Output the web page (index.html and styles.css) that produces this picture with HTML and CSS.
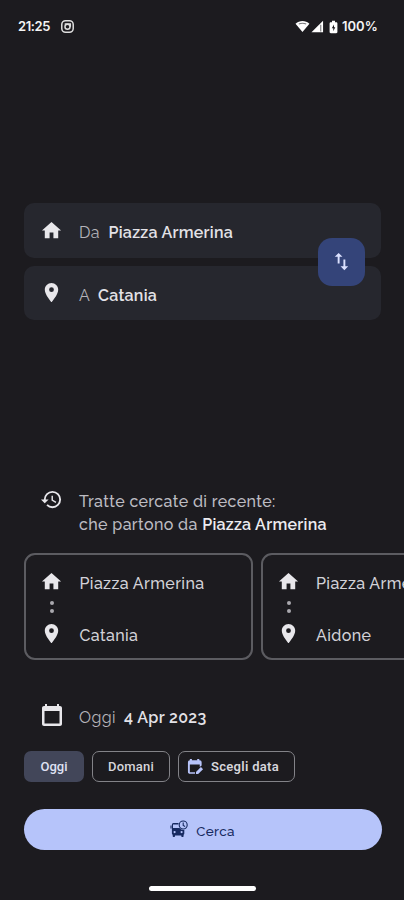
FILE: index.html
```
<!DOCTYPE html>
<html lang="it">
<head>
<meta charset="utf-8">
<meta name="viewport" content="width=device-width, initial-scale=1">
<title>Cerca tratte</title>
<link rel="stylesheet" href="styles.css">
</head>
<body>
<svg class="defs" width="0" height="0" aria-hidden="true">
  <symbol id="home" viewBox="0 0 24 24"><path d="M10 20v-6h4v6h5v-8h3L12 3 2 12h3v8z"/></symbol>
  <symbol id="pin" viewBox="0 0 24 24"><path d="M12 2C8.13 2 5 5.13 5 9c0 5.25 7 13 7 13s7-7.75 7-13c0-3.87-3.13-7-7-7zm0 9.500a2.500 2.500 0 1 1 0-5 2.500 2.500 0 0 1 0 5z"/></symbol>
</svg>
<div class="screen">
  <header class="status">
    <span class="clock">21:25</span>
    <svg class="cam" viewBox="0 0 16 16"><rect x="1.900" y="1.900" width="12.200" height="12.200" rx="4"/><circle cx="8" cy="8.200" r="2.700"/><path d="M5 5.200h6v3"/></svg>
    <span class="grow"></span>
    <svg class="wifi" viewBox="0 0 16 14"><path d="M.5 4C4.800.2 11.200.2 15.500 4L8 13z"/><path class="cut" d="M4 4.300c2.500-1 5.500-1 8 0"/></svg>
    <svg class="signal" viewBox="0 0 14 14"><path d="M.5 13.300 13 .8v12.500z"/><path class="cut" d="M10.500 5v7.300"/></svg>
    <svg class="battery" viewBox="0 0 9 14"><path d="M3 .8h3v1.400h1.200c.7 0 1.200.5 1.200 1.200v8.700c0 .7-.5 1.200-1.200 1.200H1.800c-.7 0-1.200-.5-1.200-1.200V3.400c0-.7.5-1.200 1.200-1.200H3z"/><path class="bolt" d="M5 4.500 2.800 8.300h1.500v2.900l2-3.900H5z"/></svg>
    <span class="level">100%</span>
  </header>

  <section class="route">
    <div class="field"><svg class="icon"><use href="#home"/></svg><span class="light da">Da</span><b>Piazza Armerina</b></div>
    <div class="field"><svg class="icon"><use href="#pin"/></svg><span class="light a">A</span><b>Catania</b></div>
    <button class="swap" aria-label="Inverti"><svg viewBox="0 0 24 24"><path d="M9 3 5 6.990h3V14h2V6.990h3L9 3zm7 14.010V10h-2v7.010h-3L15 21l4-3.990h-3z"/></svg></button>
  </section>

  <section class="recent">
    <svg class="icon" viewBox="0 0 24 24"><path d="M13 3a9 9 0 0 0-9 9H1l3.890 3.890.07.14L9 12H6c0-3.870 3.130-7 7-7s7 3.130 7 7-3.130 7-7 7c-1.930 0-3.680-.79-4.940-2.060l-1.420 1.420A8.954 8.954 0 0 0 13 21a9 9 0 0 0 0-18zm-1 5v5l4.280 2.540.72-1.210-3.500-2.080V8H12z"/></svg>
    <p>Tratte cercate di recente:<br>che partono da <b>Piazza Armerina</b></p>
  </section>

  <section class="trips">
    <article class="trip">
      <div class="stop"><svg class="icon"><use href="#home"/></svg><span>Piazza Armerina</span></div>
      <div class="dots"><i></i><i></i></div>
      <div class="stop"><svg class="icon"><use href="#pin"/></svg><span>Catania</span></div>
    </article>
    <article class="trip">
      <div class="stop"><svg class="icon"><use href="#home"/></svg><span>Piazza Armerina</span></div>
      <div class="dots"><i></i><i></i></div>
      <div class="stop"><svg class="icon"><use href="#pin"/></svg><span>Aidone</span></div>
    </article>
  </section>

  <section class="date">
    <svg class="icon" viewBox="0 0 24 24"><path d="M20 3h-1V1h-2v2H7V1H5v2H4c-1.100 0-2 .9-2 2v16c0 1.100.9 2 2 2h16c1.100 0 2-.9 2-2V5c0-1.100-.9-2-2-2zm-.5 17.500h-15V8h15z"/></svg>
    <span class="light">Oggi</span><b>4 Apr 2023</b>
  </section>

  <section class="chips">
    <button class="chip on">Oggi</button>
    <button class="chip mid">Domani</button>
    <button class="chip pick"><svg viewBox="0 0 18 18"><path d="M3 1h2.200v1.500h5.600V1H13v1.500h.5c1.100 0 2 .9 2 2V8l-2 1.500V7H3v8h5.500v1.800H3c-1.100 0-2-.9-2-2V4.500c0-1.100.9-2 2-2z"/><path d="m9.500 14.700 5.200-5.200 2.300 2.300-5.200 5.200H9.500z"/></svg><span>Scegli data</span></button>
  </section>

  <button class="search">
    <svg viewBox="0 0 18 18"><path fill-rule="evenodd" d="M3.500 3h5.200a5 5 0 0 0-.3 1.500H3V8h6.500a5 5 0 0 0 4.800 2v3.500c0 .6-.3 1-.7 1.300v1.500c0 .4-.3.700-.7.700H12c-.4 0-.7-.3-.7-.7V15.500H5v.8c0 .4-.3.700-.7.700h-.9c-.4 0-.7-.3-.7-.7v-1.500c-.5-.3-.8-.8-.8-1.300V5c0-1.200.6-2 1.600-2zM4.600 13.200a1.100 1.100 0 1 0 0-2.200 1.100 1.100 0 0 0 0 2.200zm7 0a1.100 1.100 0 1 0 0-2.200 1.100 1.100 0 0 0 0 2.200z"/><path class="line" d="M1 5.500v3M13.200 2.600v2.800l1.900 1.100"/><circle class="line" cx="13.200" cy="5" r="4"/></svg>
    <span>Cerca</span>
  </button>
  <div class="handle"></div>
</div>
</body>
</html>
```
FILE: styles.css
```
* { box-sizing: border-box; }
body {
  margin: 0;
  background: #1c1b1f;
  color: #e3e2e7;
  font: 500 16px/23px Raleway, Inter, "Open Sans", sans-serif;
  letter-spacing: .37px;
  overflow: hidden;
}
.defs { position: absolute; }
.screen { width: 404px; height: 900px; display: flex; flex-direction: column; overflow: hidden; }
button { border: 0; padding: 0; margin: 0; font: inherit; letter-spacing: inherit; color: inherit; background: none; }
svg { display: block; fill: #e8e7eb; flex: none; }
b { font-weight: 600; letter-spacing: .26px; }
.icon { width: 23px; height: 23px; }
.light { font-weight: 400; color: #b5b4ba; }

.status { height: 53px; padding: 0 26px 0 18px; display: flex; align-items: center; font: 600 13px/16px Inter, sans-serif; letter-spacing: 0; color: #f4f4f4; }
.clock { letter-spacing: -.4px; width: 42px; margin-top: -1px; }
.cam { width: 15px; height: 15px; }
.cam * { fill: none; stroke: #dedede; stroke-width: 1.600; }
.grow { flex: 1; }
.wifi { width: 15px; height: 13px; fill: #fff; }
.cut { fill: none; stroke: #77777a; stroke-width: 1.200; }
.signal { width: 13px; height: 13px; margin-left: 1px; fill: #fff; }
.battery { width: 9px; height: 14px; margin-left: 5px; fill: #fff; }
.bolt { fill: #1c1b1f; }
.level { margin: -1px 0 0 4px; width: 36px; white-space: nowrap; }

.route { position: relative; margin: 150px 23px 0 24px; display: flex; flex-direction: column; gap: 8px; }
.field { height: 54.500px; border-radius: 10px; background: #26272e; display: flex; align-items: center; padding-left: 16px; }
.field .light { margin-left: 16px; padding-top: 5px; }
.field b { padding-top: 5px; }
.da { width: 29.500px; }
.a { width: 19px; }
.swap { position: absolute; right: 16px; top: 35px; width: 47.500px; height: 47.500px; border-radius: 14px; background: #344479; display: grid; place-items: center; }
.swap svg { width: 23px; height: 23px; fill: #dce1ff; }

.recent { display: flex; margin: 169px 0 0 40px; height: 46px; }
.recent .icon { width: 23px; height: 23px; margin-top: -1px; }
.recent p { margin: 1px 0 0 16px; color: #bdbcc2; white-space: nowrap; }
.recent b { color: #ececf0; }

.trips { display: flex; gap: 8px; margin: 17.500px 0 0 24px; width: 465px; }
.trip { width: 228.500px; height: 107.500px; flex: none; border: 2px solid #5c5c61; border-radius: 11px; padding: 15px 0 0 14px; }
.stop { display: flex; align-items: center; gap: 16.500px; height: 23px; color: #d3d2d8; white-space: nowrap; }
.stop span { padding-top: 4px; }
.dots { width: 24px; height: 29px; padding-top: 8px; display: flex; flex-direction: column; align-items: center; gap: 4px; }
.dots i { width: 4px; height: 4px; border-radius: 50%; background: #a9a8ae; }

.date { display: flex; align-items: center; margin: 43px 0 0 39.500px; height: 24px; }
.date .icon { width: 24px; height: 24px; }
.date .light { margin-left: 15.500px; width: 45px; padding-top: 5px; }
.date b { padding-top: 5px; letter-spacing: .35px; }

.chips { display: flex; gap: 8px; margin: 23.500px 0 0 24px; font: 500 13px/16px Roboto, sans-serif; letter-spacing: 0; }
.chip { height: 31.500px; border: 1px solid #838388; border-radius: 7px; display: flex; align-items: center; justify-content: center; color: #d6d5db; white-space: nowrap; padding-top: 1px; }
.on { width: 60px; border: 0; background: #424659; color: #dfe1f3; }
.mid { width: 78px; letter-spacing: .2px; }
.pick { width: 116.500px; gap: 7px; justify-content: flex-start; padding-left: 8px; font-weight: 600; letter-spacing: .3px; }
.pick svg { width: 17px; height: 17px; fill: #b8c4fa; }

.search { margin: 27px 22.500px 0 23.500px; height: 40.500px; flex: none; border-radius: 21px; background: #b6c4fa; color: #172a60; display: flex; align-items: center; justify-content: center; font-size: 13.500px; gap: 8px; }
.search svg { width: 18px; height: 18px; fill: #172a60; }
.search .line { fill: none; stroke: #172a60; stroke-width: 1.100; }
.search span { padding-top: 4px; }
.handle { width: 107px; height: 4.500px; margin: 36.500px 0 0 149px; border-radius: 3px; background: #fff; flex: none; }
```
